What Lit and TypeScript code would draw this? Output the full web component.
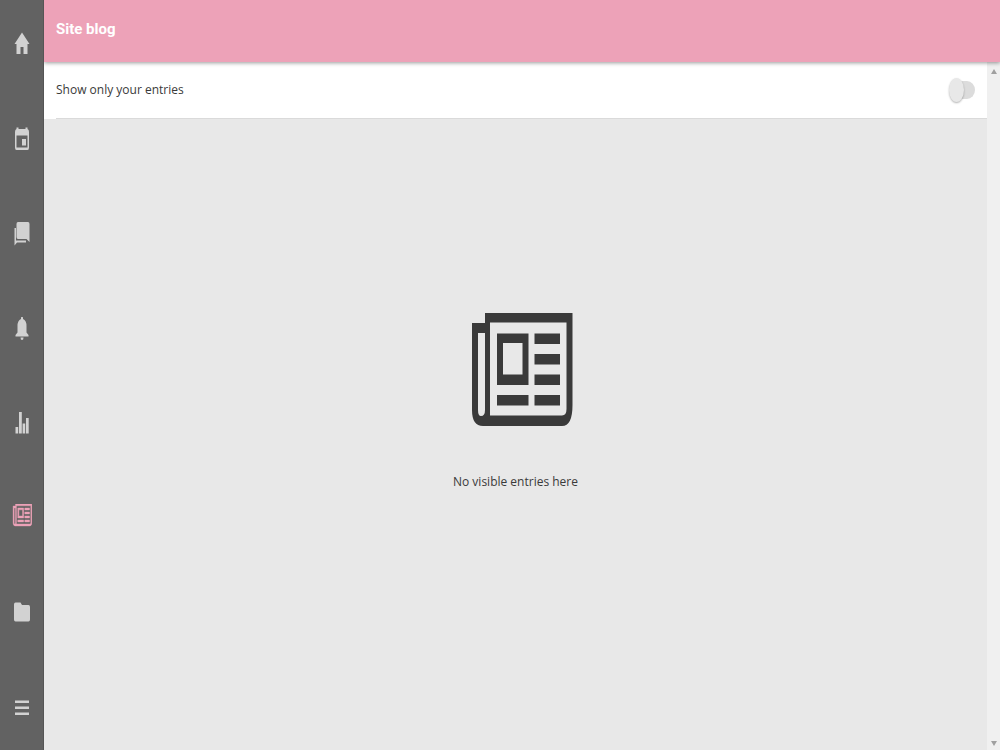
import { LitElement, html, css, svg } from "lit";
import { customElement, state } from "lit/decorators.js";

const newsShape = svg`
  <path fill-rule="evenodd" d="M26 0H113.500V92Q113.500 113 103 113H24Q13 113 13 97V10H26ZM19 20V97Q19 103 22 103Q26 103 26 97V20ZM31 9.5V102.500H103Q107.500 102.500 107.500 96V9.5Z"/>
  <path fill-rule="evenodd" d="M38 20.500H69.500V72H38ZM44 30V61.500H63.500V30Z"/>
  <path d="M75.500 20.500H101V31H75.500ZM75.500 41H101V51.500H75.500ZM75.500 61.500H101V72H75.500ZM75.500 82H101V92.500H75.500ZM38 82H69.500V92.500H38Z"/>`;

const icon = (width: number, height: number, shape: unknown) =>
  html`<svg width=${width} height=${height} viewBox="0 0 ${width} ${height}" aria-hidden="true">${shape}</svg>`;

const items = [
  { name: "Home", art: icon(16, 24, svg`<path d="M8 .5L15.500 12H13.500V22H9.500V15H6.500V22H2.500V12H.5Z"/>`) },
  { name: "Calendar", art: icon(16, 24, svg`<path fill-rule="evenodd" d="M2.500 .5H4.500V2H11.500V.5H13.500V2Q15 2.500 15 5V20.500Q15 23 13.500 23H2.500Q1 23 1 20.500V5Q1 2.500 2.500 2ZM2.500 8.500V20.500H13.500V8.500ZM8 12H12V18.500H8Z"/>`) },
  { name: "Messages", art: icon(16, 24, svg`<path d="M4 0H14Q15.500 0 15.500 2V20L12.500 17H4Q2.500 17 2.500 15V2Q2.500 0 4 0Z"/><path d="M.5 6H2V18.500H12V20.500H3L.5 23.500Z"/>`) },
  { name: "Notifications", art: icon(16, 24, svg`<path d="M7 .5Q8 -1 9 .5V2Q12.500 3.500 12.500 9V15.500L14.500 18V19.500H1.500V18L3.500 15.500V9Q3.500 3.500 7 2Z"/><path d="M6.500 20.500H9.500Q9.500 23 8 23T6.500 20.500Z"/>`) },
  { name: "Grades", art: icon(16, 24, svg`<path d="M1.500 16H4.200V22.500H1.500ZM5 1H7.800V22.500H5ZM8.600 12.500H11.200V22.500H8.600ZM12 7H14.700V22.500H12Z"/>`) },
  { name: "Site blog", art: html`<svg class="news" viewBox="2 0 112 144" preserveAspectRatio="none" aria-hidden="true">${newsShape}</svg>` },
  { name: "Files", art: icon(16, 24, svg`<path d="M1.500 1.500H6.500L8 4H14.500Q16 4 16 6V18.500Q16 20.500 14.500 20.500H1.500Q0 20.500 0 18.500V3.500Q0 1.500 1.500 1.500Z"/>`) },
  { name: "More", art: icon(16, 24, svg`<path d="M1 4.500H15V7H1ZM1 10.500H15V13H1ZM1 16.500H15V19H1Z"/>`) },
];

@customElement("app-root")
export class AppRoot extends LitElement {
  static styles = css`
    :host {
      display: flex;
      height: 100vh;
      overflow: hidden;
      font-family: "Open Sans", "Noto Sans", sans-serif;
      font-size: 12px;
      line-height: 20px;
      color: #3a3a3a;
      background: #e8e8e8;
    }
    .rail {
      flex: none;
      box-sizing: border-box;
      width: 44px;
      padding: 30px 0 28px;
      display: flex;
      flex-direction: column;
      justify-content: space-between;
      background: #626262;
      border-right: 1px solid #555;
      z-index: 2;
    }
    .tab {
      display: flex;
      align-items: center;
      justify-content: center;
      height: 28px;
      padding: 0;
      border: 0;
      background: none;
      color: #d2d2d2;
      cursor: pointer;
    }
    .tab.active { color: #eda2b8; }
    svg { display: block; fill: currentColor; }
    .news { width: 21px; height: 28px; stroke: currentColor; stroke-width: 2px; }
    .main {
      flex: 1;
      min-width: 0;
      display: flex;
      flex-direction: column;
    }
    .bar {
      flex: none;
      height: 62px;
      padding: 0 12px 4px;
      box-sizing: border-box;
      display: flex;
      align-items: center;
      background: #eda2b8;
      box-shadow: 0 1px 4px rgba(0, 0, 0, 0.4);
      z-index: 1;
    }
    .title {
      margin: 0;
      font: 700 15px/24px Roboto, sans-serif;
      color: #fff;
    }
    .body { flex: 1; min-height: 0; display: flex; }
    .content {
      flex: 1;
      min-width: 0;
      display: flex;
      flex-direction: column;
    }
    .filter { padding-left: 12px; background: #fff; }
    .row {
      height: 56px;
      display: flex;
      align-items: center;
      justify-content: space-between;
      padding-right: 12px;
      border-bottom: 1px solid #dadada;
    }
    .toggle {
      appearance: none;
      display: flex;
      align-items: center;
      width: 24px;
      height: 18px;
      margin: 0;
      border-radius: 8px / 9px;
      background: #dcdcdc;
      cursor: pointer;
    }
    .toggle::before {
      content: "";
      flex: none;
      width: 15px;
      height: 24px;
      margin-left: -2px;
      border-radius: 50%;
      background: #e8e8e8;
      box-shadow: 0 1px 2px rgba(0, 0, 0, 0.3);
    }
    .toggle:checked { justify-content: flex-end; background: #eda2b8; }
    .empty {
      flex: 1;
      display: flex;
      flex-direction: column;
      align-items: center;
      justify-content: center;
      gap: 46px;
      padding-bottom: 64px;
    }
    .empty-icon { width: 114px; height: 113px; }
    .message { margin: 0; }
    .scroll {
      flex: none;
      width: 13px;
      box-sizing: border-box;
      padding: 7px 0 4px;
      display: flex;
      flex-direction: column;
      align-items: center;
      justify-content: space-between;
      background: #f0f0f0;
      color: #a0a0a0;
    }
  `;

  @state() private onlyMine = false;
  @state() private active = "Site blog";

  render() {
    return html`
      <nav class="rail">
        ${items.map(
          (item) => html`<button
            class="tab ${item.name === this.active ? "active" : ""}"
            aria-label=${item.name}
            @click=${() => (this.active = item.name)}
          >${item.art}</button>`
        )}
      </nav>
      <main class="main">
        <header class="bar"><h1 class="title">Site blog</h1></header>
        <div class="body">
          <section class="content">
            <div class="filter">
              <div class="row">
                <label for="mine">Show only your entries</label>
                <input
                  id="mine"
                  class="toggle"
                  type="checkbox"
                  .checked=${this.onlyMine}
                  @change=${(e: Event) => (this.onlyMine = (e.target as HTMLInputElement).checked)}
                />
              </div>
            </div>
            <div class="empty">
              <svg class="empty-icon" viewBox="0 0 114 113" aria-hidden="true">${newsShape}</svg>
              <p class="message">No visible entries here</p>
            </div>
          </section>
          <div class="scroll" aria-hidden="true">
            ${icon(6, 5, svg`<path d="M3 0L6 5H0Z"/>`)}
            ${icon(6, 5, svg`<path d="M0 0H6L3 5Z"/>`)}
          </div>
        </div>
      </main>
    `;
  }
}
